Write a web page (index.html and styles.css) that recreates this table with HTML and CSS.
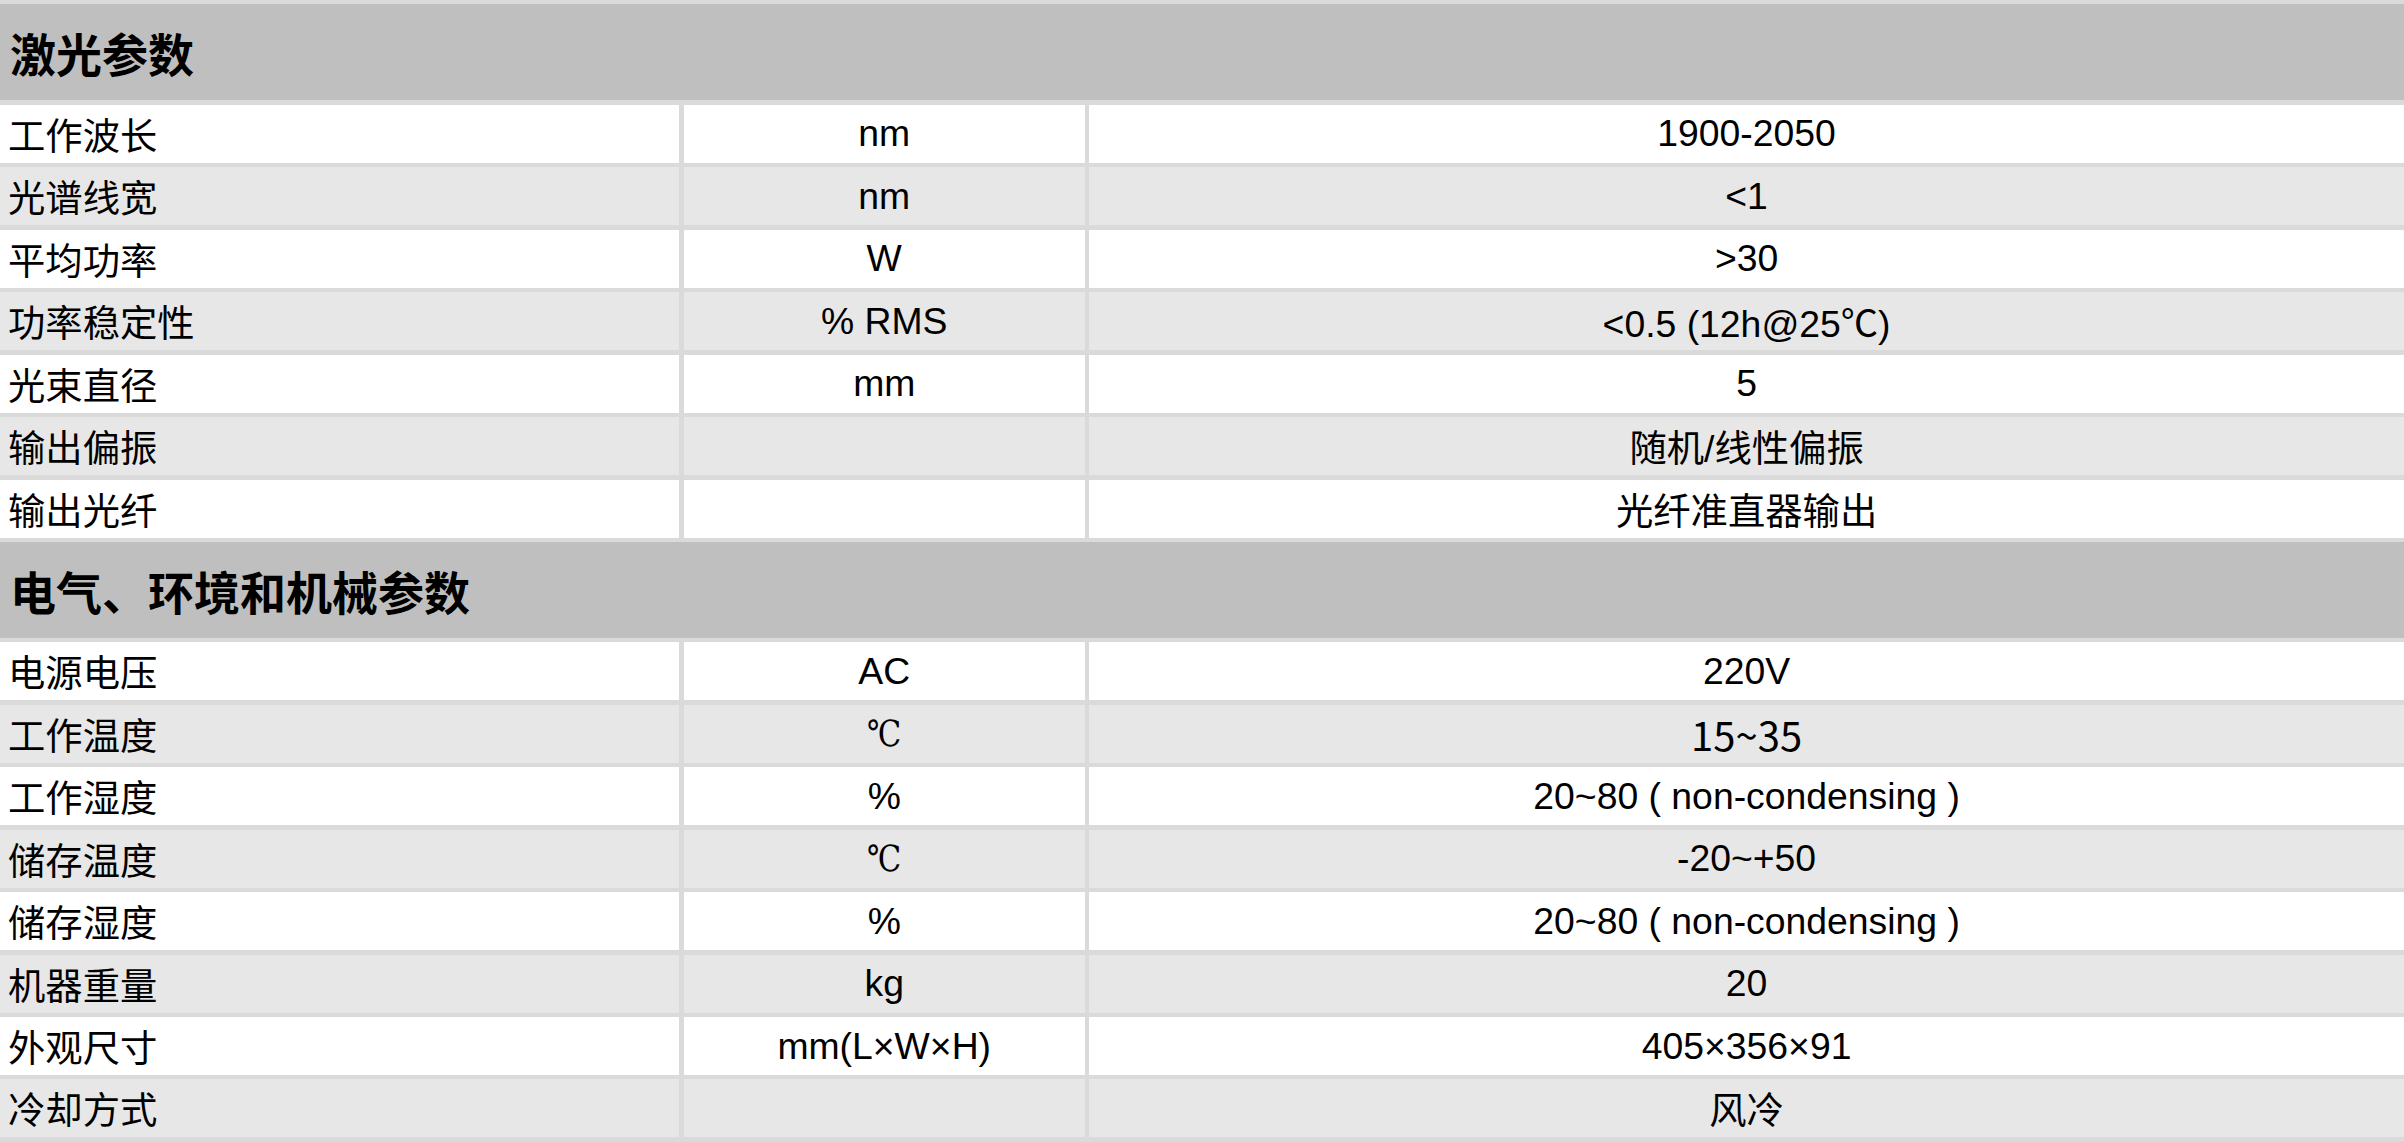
FILE: index.html
```html
<!DOCTYPE html>
<html lang="zh-CN">
<head>
<meta charset="utf-8">
<title>参数表</title>
<link rel="stylesheet" href="styles.css">
</head>
<body>
<div class="sheet">
  <div class="section">激光参数</div>

  <div class="row"><div class="name">工作波长</div><div class="unit">nm</div><div class="val">1900-2050</div></div>
  <div class="row alt"><div class="name">光谱线宽</div><div class="unit">nm</div><div class="val">&lt;1</div></div>
  <div class="row"><div class="name">平均功率</div><div class="unit">W</div><div class="val">&gt;30</div></div>
  <div class="row alt"><div class="name">功率稳定性</div><div class="unit">% RMS</div><div class="val">&lt;0.5 (12h@25℃)</div></div>
  <div class="row"><div class="name">光束直径</div><div class="unit">mm</div><div class="val">5</div></div>
  <div class="row alt"><div class="name">输出偏振</div><div class="unit"></div><div class="val">随机/线性偏振</div></div>
  <div class="row"><div class="name">输出光纤</div><div class="unit"></div><div class="val">光纤准直器输出</div></div>

  <div class="section">电气、环境和机械参数</div>

  <div class="row"><div class="name">电源电压</div><div class="unit">AC</div><div class="val">220V</div></div>
  <div class="row alt"><div class="name">工作温度</div><div class="unit"><span class="serif-unit">℃</span></div><div class="val"><span class="cjk-num">15~35</span></div></div>
  <div class="row"><div class="name">工作湿度</div><div class="unit">%</div><div class="val">20~80 ( non-condensing )</div></div>
  <div class="row alt"><div class="name">储存温度</div><div class="unit"><span class="serif-unit">℃</span></div><div class="val">-20~+50</div></div>
  <div class="row"><div class="name">储存湿度</div><div class="unit">%</div><div class="val">20~80 ( non-condensing )</div></div>
  <div class="row alt"><div class="name">机器重量</div><div class="unit">kg</div><div class="val">20</div></div>
  <div class="row"><div class="name">外观尺寸</div><div class="unit">mm(L×W×H)</div><div class="val">405×356×91</div></div>
  <div class="row alt"><div class="name">冷却方式</div><div class="unit"></div><div class="val">风冷</div></div>
</div>
</body>
</html>
```

FILE: styles.css
```css
html, body {
  margin: 0;
  padding: 0;
  background: #ffffff;
}

body {
  font-family: "Liberation Sans", "Noto Sans CJK SC", sans-serif;
  color: #000000;
}

.sheet {
  display: grid;
  grid-template-columns: 679.3px 401px 1fr;
  grid-auto-rows: auto;
  gap: 4.44px;
  padding: 4.44px 0;
  background: #dadada;
  width: 2404px;
  box-sizing: border-box;
}

.section {
  grid-column: 1 / -1;
  height: 96px;
  display: flex;
  align-items: center;
  padding-left: 10px;
  background: #bfbfbf;
  font-family: "Noto Sans CJK SC", sans-serif;
  font-weight: 700;
  font-size: 46px;
}

.row {
  display: contents;
}

.row > div {
  height: 58px;
  display: flex;
  align-items: center;
  background: #ffffff;
  font-size: 37.33px;
  white-space: nowrap;
}

.row.alt > div {
  background: #e7e7e7;
}

.name {
  padding-left: 8px;
}

.unit,
.val {
  justify-content: center;
}

.serif-unit {
  font-family: "DejaVu Serif", "Liberation Serif", serif;
  font-size: 36px;
  transform: scaleX(0.85);
  display: inline-block;
}

.cjk-num {
  font-family: "Noto Sans CJK SC", sans-serif;
  font-size: 40px;
}
```
